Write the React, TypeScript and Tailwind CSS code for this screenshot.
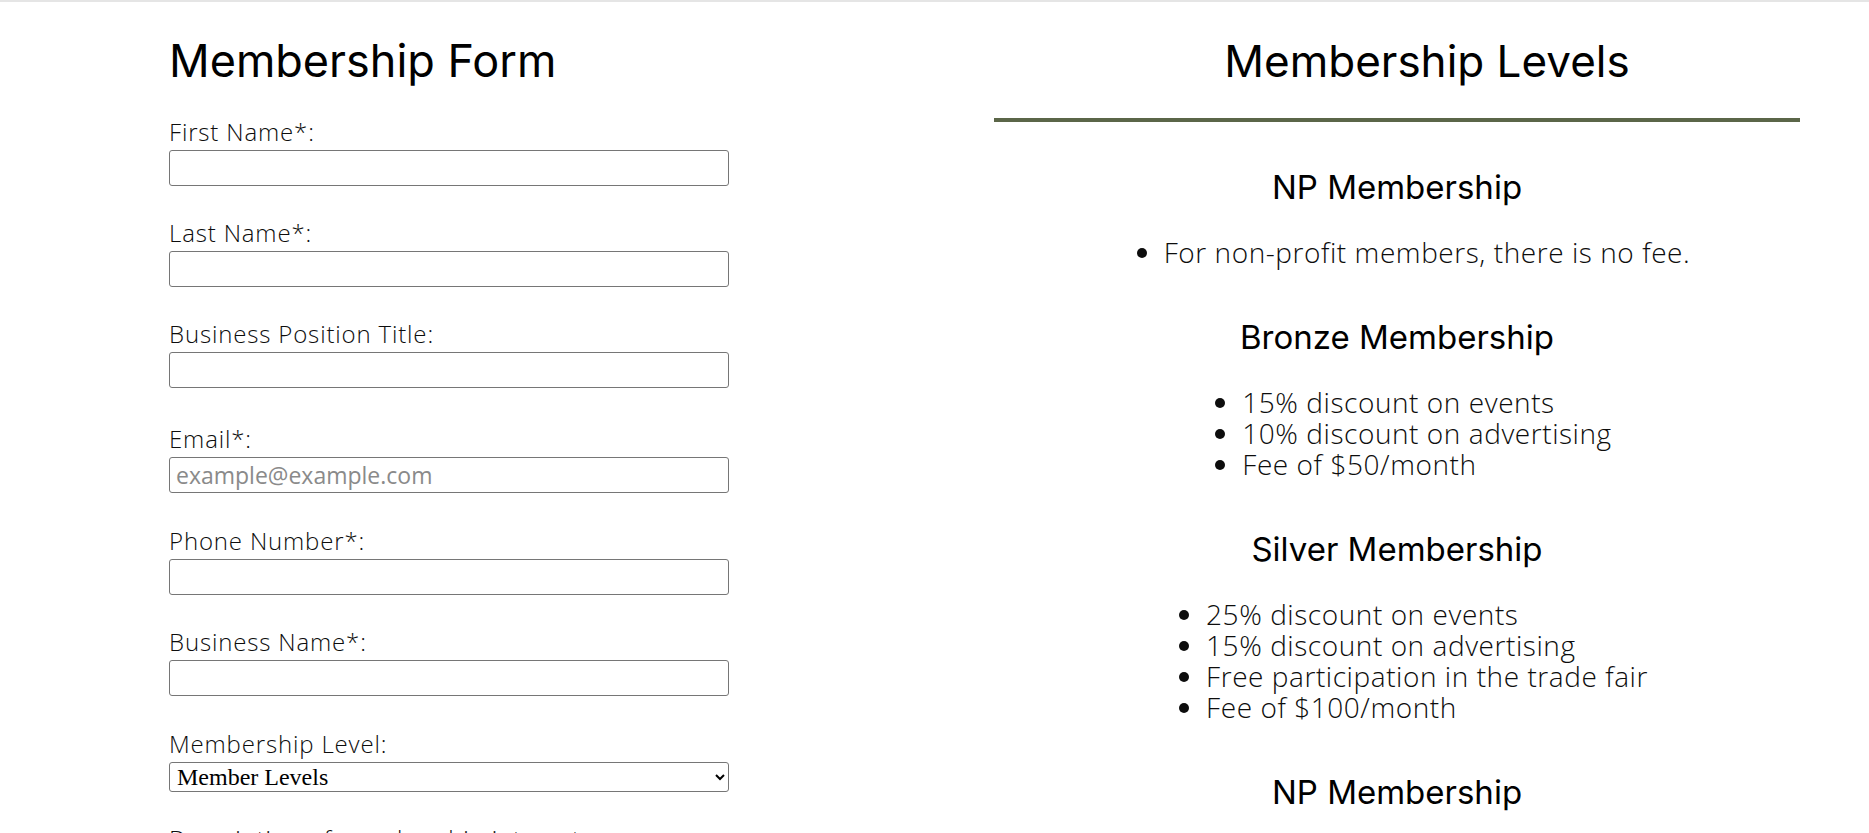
import { useState } from "react";

const fields = [
  { label: "First Name*:", name: "firstName", extra: "" },
  { label: "Last Name*:", name: "lastName", extra: "" },
  { label: "Business Position Title:", name: "title", extra: "" },
  { label: "Email*:", name: "email", extra: "mt-[4px]", placeholder: "example@example.com", type: "email" },
  { label: "Phone Number*:", name: "phone", extra: "mt-[1px]", type: "tel" },
  { label: "Business Name*:", name: "business", extra: "" },
];

const levels = [
  { title: "NP Membership", perks: ["For non-profit members, there is no fee."] },
  { title: "Bronze Membership", perks: ["15% discount on events", "10% discount on advertising", "Fee of $50/month"] },
  {
    title: "Silver Membership",
    perks: [
      "25% discount on events",
      "15% discount on advertising",
      "Free participation in the trade fair",
      "Fee of $100/month",
    ],
  },
  { title: "NP Membership", perks: ["35% discount on events"] },
];

export default function App() {
  const [form, setForm] = useState<Record<string, string>>({});
  const [level, setLevel] = useState("");

  function handleChange(e: any) {
    const { name, value } = e.target;
    setForm({ ...form, [name]: value });
  }

  return (
    <div className="min-h-screen bg-white border-t-2 border-[#e5e5e5] flex text-black">
      <div className="ml-[169px] w-[560px] pt-[34px]">
        <h1 className="font-['Inter',sans-serif] text-[45px] leading-[50px] font-normal">Membership Form</h1>
        <form className="mt-[32px] flex flex-col font-['Open_Sans',sans-serif]" onSubmit={(e) => e.preventDefault()}>
          {fields.map((f) => (
            <div key={f.name} className={"flex flex-col mb-[33px] " + f.extra}>
              <label htmlFor={f.name} className="text-[24px] leading-[28px] font-light tracking-[0.035em] text-[#0d0d0d] mb-[4px]">
                {f.label}
              </label>
              <input
                id={f.name}
                name={f.name}
                type={f.type || "text"}
                value={form[f.name] || ""}
                onChange={handleChange}
                placeholder={f.placeholder}
                className="h-[36px] w-full border border-[#767676] rounded-[3px] px-[6px] text-[23px] font-normal placeholder:text-[#8a8a8a] outline-none"
              />
            </div>
          ))}
          <div className="flex flex-col mb-[33px] mt-[1px]">
            <label htmlFor="level" className="text-[24px] leading-[28px] font-light tracking-[0.035em] text-[#0d0d0d] mb-[4px]">
              Membership Level:
            </label>
            <select
              id="level"
              value={level}
              onChange={(e) => setLevel(e.target.value)}
              className="h-[30px] w-full border border-[#767676] rounded-[3px] pl-[3px] font-['Liberation_Serif',serif] text-[24px] leading-[28px] bg-white"
            >
              <option value="">Member Levels</option>
              <option value="np">NP Membership</option>
              <option value="bronze">Bronze Membership</option>
              <option value="silver">Silver Membership</option>
            </select>
          </div>
          <div className="flex flex-col mb-[33px]">
            <label htmlFor="desc" className="text-[24px] leading-[28px] font-light tracking-[0.035em] text-[#0d0d0d] mb-[4px]">
              Description of membership interest:
            </label>
            <textarea id="desc" className="h-[100px] w-full border border-[#767676] rounded-[3px] px-[7px]" />
          </div>
        </form>
      </div>

      <div className="ml-auto mr-[69px] w-[806px] pt-[34px]">
        <h2 className="font-['Inter',sans-serif] text-[44px] leading-[50px] font-normal text-center pl-[60px]">
          Membership Levels
        </h2>
        <div className="mt-[32px] h-[4px] bg-[#5b6648]" />
        <div className="mt-[47px]">
          {levels.map((lv, i) => (
            <div key={i}>
              <h3 className="font-['Inter',sans-serif] text-[33px] leading-[36px] font-normal text-center mb-[32px]">
                {lv.title}
              </h3>
              <div className="text-center pl-[60px] mb-[50px]">
                <ul className="inline-block text-left list-disc font-['Open_Sans',sans-serif] font-light tracking-[0.02em] text-[28px] leading-[31px] text-[#0d0d0d]">
                  {lv.perks.map((p) => (
                    <li key={p}>{p}</li>
                  ))}
                </ul>
              </div>
            </div>
          ))}
        </div>
      </div>
    </div>
  );
}
